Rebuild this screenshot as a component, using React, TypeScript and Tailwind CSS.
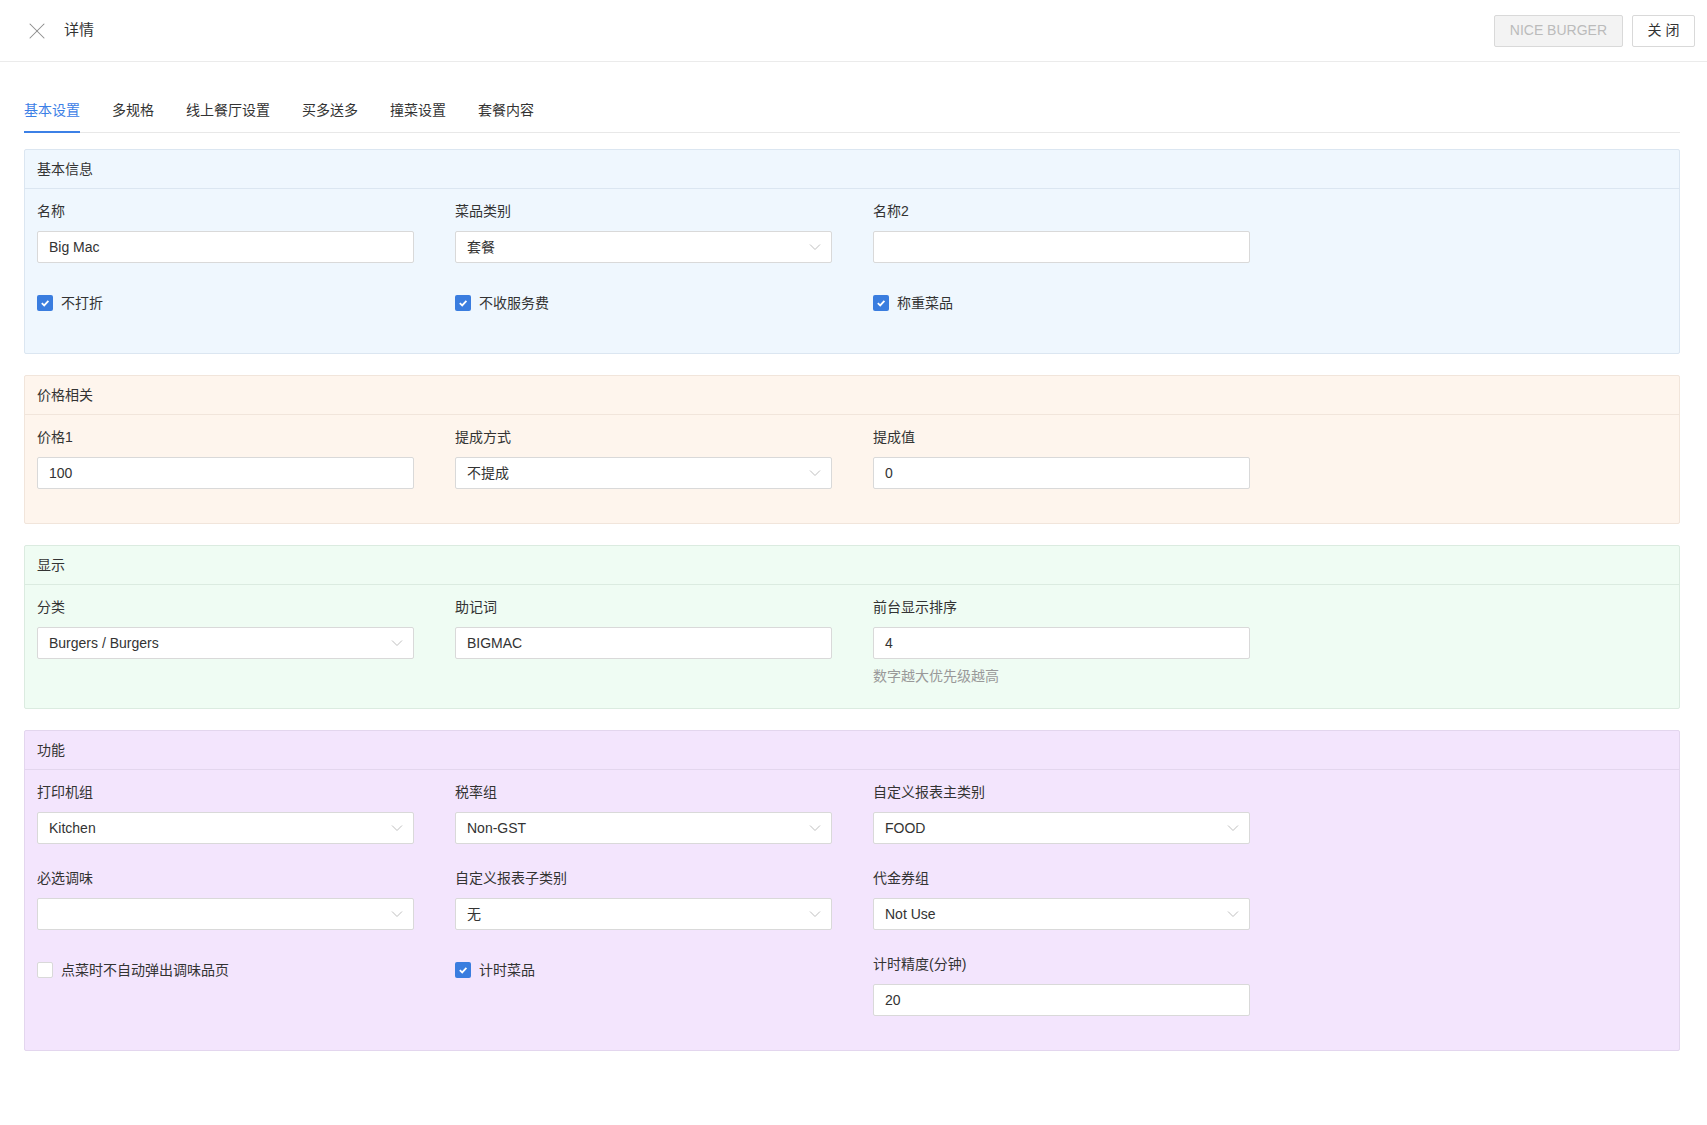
import { X } from 'lucide-react'

type Field =
  | { kind: 'input'; label: string; value: string; hint?: string }
  | { kind: 'select'; label: string; value: string }
  | { kind: 'check'; label: string; checked: boolean }

type Section = {
  title: string
  bg: string
  border: string
  rows: Field[][]
}

const SECTIONS: Section[] = [
  {
    title: '基本信息',
    bg: 'bg-[#eff7fe]',
    border: 'border-[#dbe6f1]',
    rows: [
      [
        { kind: 'input', label: '名称', value: 'Big Mac' },
        { kind: 'select', label: '菜品类别', value: '套餐' },
        { kind: 'input', label: '名称2', value: '' },
      ],
      [
        { kind: 'check', label: '不打折', checked: true },
        { kind: 'check', label: '不收服务费', checked: true },
        { kind: 'check', label: '称重菜品', checked: true },
      ],
    ],
  },
  {
    title: '价格相关',
    bg: 'bg-[#fef5ed]',
    border: 'border-[#f1e5db]',
    rows: [
      [
        { kind: 'input', label: '价格1', value: '100' },
        { kind: 'select', label: '提成方式', value: '不提成' },
        { kind: 'input', label: '提成值', value: '0' },
      ],
    ],
  },
  {
    title: '显示',
    bg: 'bg-[#effcf3]',
    border: 'border-[#dbebe0]',
    rows: [
      [
        { kind: 'select', label: '分类', value: 'Burgers / Burgers' },
        { kind: 'input', label: '助记词', value: 'BIGMAC' },
        { kind: 'input', label: '前台显示排序', value: '4', hint: '数字越大优先级越高' },
      ],
    ],
  },
  {
    title: '功能',
    bg: 'bg-[#f3e5fd]',
    border: 'border-[#e3d6ee]',
    rows: [
      [
        { kind: 'select', label: '打印机组', value: 'Kitchen' },
        { kind: 'select', label: '税率组', value: 'Non-GST' },
        { kind: 'select', label: '自定义报表主类别', value: 'FOOD' },
      ],
      [
        { kind: 'select', label: '必选调味', value: '' },
        { kind: 'select', label: '自定义报表子类别', value: '无' },
        { kind: 'select', label: '代金券组', value: 'Not Use' },
      ],
      [
        { kind: 'check', label: '点菜时不自动弹出调味品页', checked: false },
        { kind: 'check', label: '计时菜品', checked: true },
        { kind: 'input', label: '计时精度(分钟)', value: '20' },
      ],
    ],
  },
]

const TABS = ['基本设置', '多规格', '线上餐厅设置', '买多送多', '撞菜设置', '套餐内容']

function Chevron() {
  return (
    <svg width="12" height="12" viewBox="0 0 12 12" className="text-[#bfbfbf]">
      <polyline points="1,3.5 6,8.5 11,3.5" fill="none" stroke="currentColor" strokeWidth="1" />
    </svg>
  )
}

function FieldItem({ field }: { field: Field }) {
  if (field.kind === 'check') {
    return (
      <div className="flex items-center h-8">
        {field.checked ? (
          <span className="w-4 h-4 rounded-[2px] bg-[#3a7ddf] flex items-center justify-center">
            <svg width="10" height="10" viewBox="0 0 10 10">
              <polyline points="1.8,5.2 4.2,7.4 8.4,2.8" fill="none" stroke="#fff" strokeWidth="1.8" />
            </svg>
          </span>
        ) : (
          <span className="w-4 h-4 rounded-[2px] bg-white border border-[#d9d9d9]" />
        )}
        <span className="ml-2 text-[14px] text-[#333]">{field.label}</span>
      </div>
    )
  }

  return (
    <div>
      <div className="text-[14px] leading-5 text-[#333] mb-[10px]">{field.label}</div>
      <div className="h-8 bg-white border border-[#d9d9d9] rounded-[2px] pl-[11px] pr-[10px] flex items-center justify-between">
        <span className="text-[14px] text-[#333]">{field.value}</span>
        {field.kind === 'select' && <Chevron />}
      </div>
      {field.kind === 'input' && field.hint && (
        <div className="mt-[7px] text-[14px] leading-5 text-[#999]">{field.hint}</div>
      )}
    </div>
  )
}

function SectionCard({ section }: { section: Section }) {
  const hasHint = section.rows.some((r) => r.some((f) => f.kind === 'input' && f.hint))
  return (
    <div className={`border rounded-[2px] ${section.bg} ${section.border}`}>
      <div className={`h-[39px] flex items-center px-3 border-b ${section.border}`}>
        <span className="text-[14px] text-[#333]">{section.title}</span>
      </div>
      <div className={`px-3 pt-3 ${hasHint ? 'pb-[22px]' : 'pb-[34px]'} flex flex-col gap-6`}>
        {section.rows.map((row, i) => (
          <div key={i} className="grid grid-cols-[377px_377px_377px] gap-x-[41px]">
            {row.map((f) => (
              <FieldItem key={f.label} field={f} />
            ))}
          </div>
        ))}
      </div>
    </div>
  )
}

export default function App() {
  return (
    <div className="min-h-screen bg-white font-['Liberation_Sans','Noto_Sans_CJK_SC',sans-serif] text-[#333]">
      <div className="h-[62px] border-b border-[#ebebeb] flex items-center justify-between pl-[23px] pr-3">
        <div className="flex items-center">
          <X size={28} strokeWidth={0.9} className="text-[#8c8c8c]" />
          <span className="ml-[13px] text-[15px] text-[#333]">详情</span>
        </div>
        <div className="flex items-center gap-[9px]">
          <button className="h-8 px-[15px] bg-[#f3f3f3] border border-[#d9d9d9] rounded-[2px] text-[14px] text-[#bbb]">
            NICE BURGER
          </button>
          <button className="h-8 w-[63px] bg-white border border-[#d9d9d9] rounded-[2px] text-[14px] text-[#333] tracking-[4px] pl-[4px]">
            关闭
          </button>
        </div>
      </div>

      <div className="pl-6 pr-[27px]">
        <div className="mt-[38px] flex gap-8 border-b border-[#e8e8e8]">
          {TABS.map((t, i) => (
            <div
              key={t}
              className={`-mb-px pb-[11px] leading-5 text-[14px] border-b-2 ${
                i === 0 ? 'text-[#3c80e6] border-[#3c80e6]' : 'text-[#333] border-transparent'
              }`}
            >
              {t}
            </div>
          ))}
        </div>

        <div className="mt-4 flex flex-col gap-[21px] pb-10">
          {SECTIONS.map((s) => (
            <SectionCard key={s.title} section={s} />
          ))}
        </div>
      </div>
    </div>
  )
}
